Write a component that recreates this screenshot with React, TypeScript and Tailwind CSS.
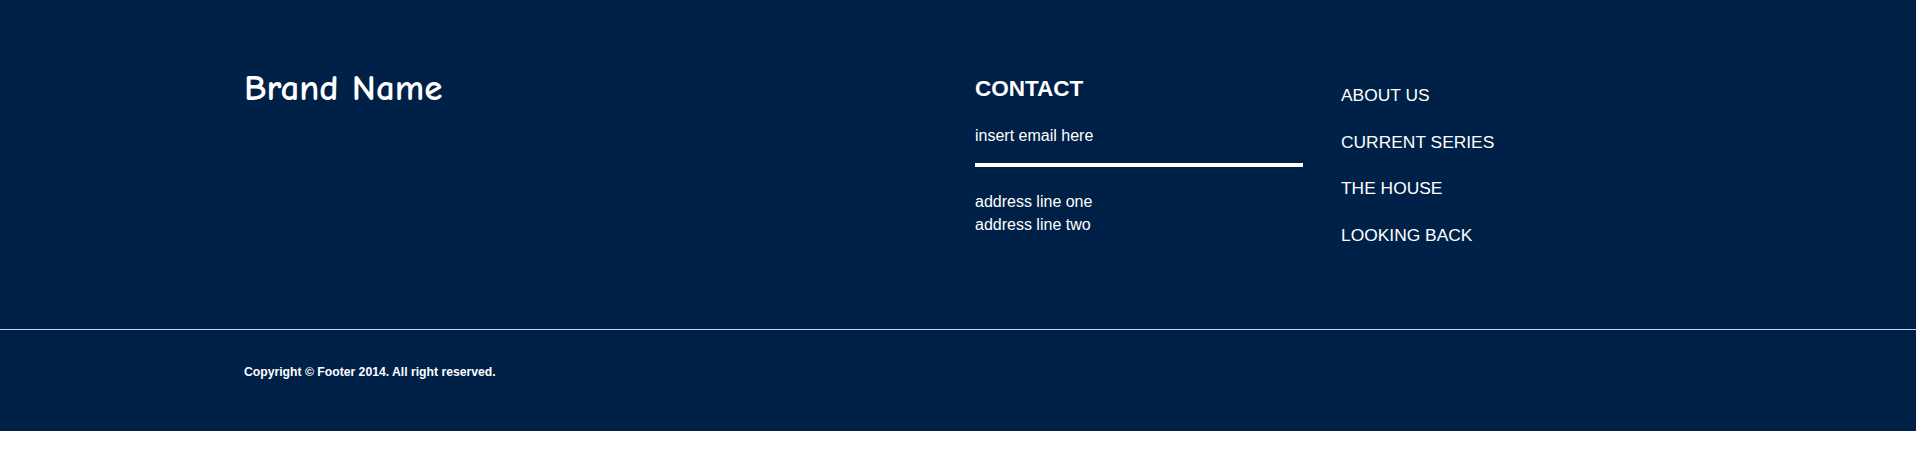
export default function App() {
  const navLinks = ["ABOUT US", "CURRENT SERIES", "THE HOUSE", "LOOKING BACK"];

  return (
    <footer className="w-full bg-[#002147] text-white font-['Liberation_Sans',Arial,sans-serif]">
      <div className="h-[329px] pl-[244px] pt-[72px] flex items-start">
        <div className="w-[731px] -mt-[6px]">
          <h2 className="font-['Comic_Sans_MS','Comic_Neue',cursive] text-[37px] leading-[44px] font-semibold">
            Brand Name
          </h2>
        </div>

        <div className="w-[328px] mt-[4px]">
          <h3 className="text-[22.5px] leading-[26px] font-bold">CONTACT</h3>
          <p className="mt-[24px] text-[16px] leading-[20px]">insert email here</p>
          <div className="mt-[17px] h-[4px] w-[328px] bg-white" />
          <p className="mt-[23px] text-[16px] leading-[23px]">
            address line one
            <br />
            address line two
          </p>
        </div>

        <ul className="ml-[38px] text-[17.4px] leading-[46.5px]">
          {navLinks.map((link) => (
            <li key={link}>
              <a href="#" className="hover:underline">
                {link}
              </a>
            </li>
          ))}
        </ul>
      </div>

      <div className="h-px bg-[#c9d1dc]" />

      <div className="h-[101px] pl-[244px] pt-[34px]">
        <p className="text-[12.2px] leading-[16px] font-bold">
          Copyright © Footer 2014. All right reserved.
        </p>
      </div>
    </footer>
  );
}
